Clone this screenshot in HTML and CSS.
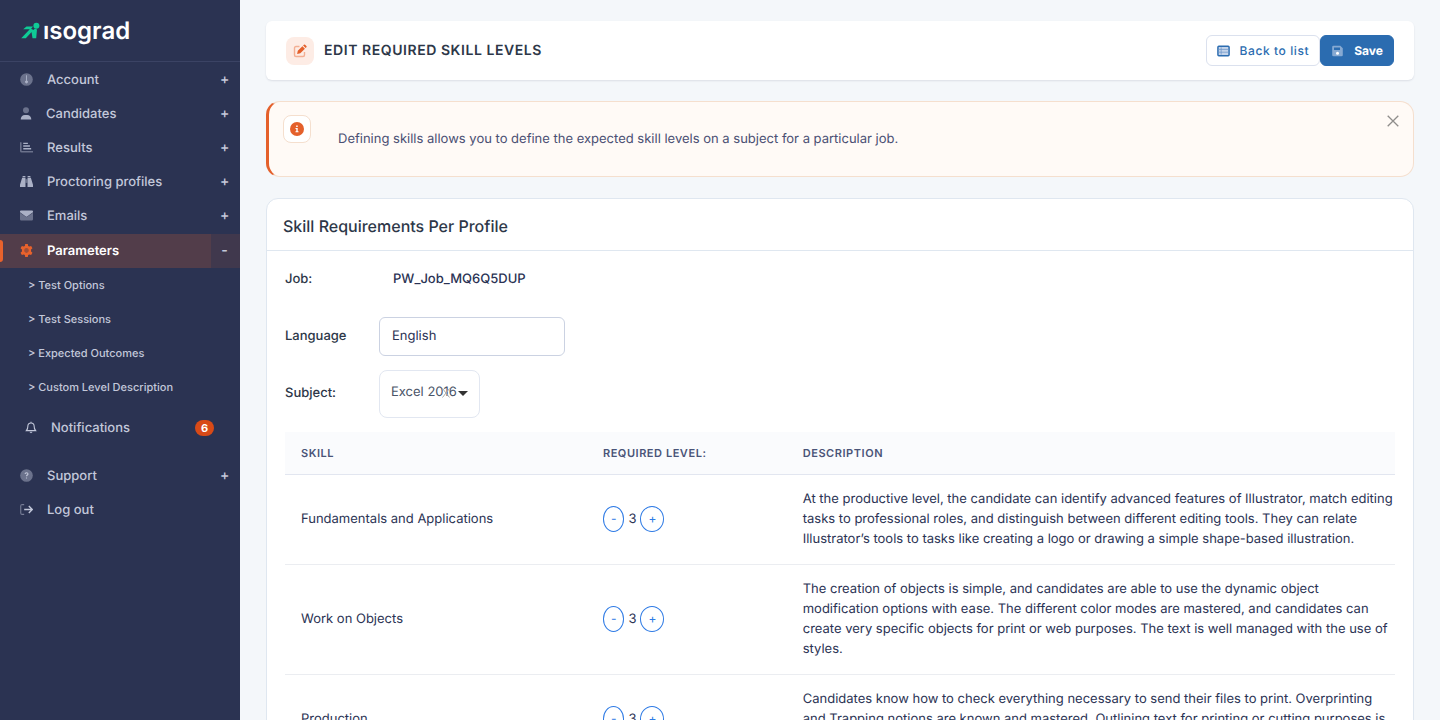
FILE: index.html
```html
<!DOCTYPE html>
<html lang="en">
<head>
<meta charset="utf-8">
<title>Edit required skill levels</title>
<link rel="stylesheet" href="styles.css">
</head>
<body>
<div class="app">
  <aside class="sidebar">
    <a class="brand" href="#">
      <svg class="brand-mark" viewBox="0 0 19 17" aria-hidden="true"><circle cx="15.400" cy="3.800" r="3"/><path d="M5.500 4.500h6.500L9.800 7.300H2.200zM9.500 6.500l3 1.500L4.800 16.200H.2zM10.500 9.800 14 6.600l2 .8-.800 8.800h-3.700z"/></svg>
      <span class="brand-name">ısograd</span>
    </a>
    <nav class="menu">
      <a class="item" href="#">
        <svg class="icon" viewBox="0 0 14 14"><circle class="dim" cx="7" cy="7" r="6.800"/><path d="M6.500 2.500h1v5.500a1.600 1.600 0 1 1-1 0z"/></svg>
        <span class="label">Account</span><span class="sign">+</span>
      </a>
      <a class="item" href="#">
        <svg class="icon narrow" viewBox="0 0 12 14"><circle class="dim" cx="6" cy="3.600" r="3.200"/><path d="M0.300 13.500c0-3 1.800-5 4.500-5h2.400c2.700 0 4.500 2 4.500 5z"/></svg>
        <span class="label">Candidates</span><span class="sign">+</span>
      </a>
      <a class="item" href="#">
        <svg class="icon" viewBox="0 0 14 14"><path class="dim" d="M0 1.300h1.700v9.500H14v1.700H1.700A1.700 1.700 0 0 1 0 10.800z"/><path d="M3.500 1.800h5v1.500h-5zM3.500 4.700h7.200v1.500H3.500zM3.500 7.600h8.500v1.500H3.500z"/></svg>
        <span class="label">Results</span><span class="sign">+</span>
      </a>
      <a class="item" href="#">
        <svg class="icon" viewBox="0 0 14 14"><path d="M2.300 3h3.600v10H0v-2.500zM11.700 3H8.100v10H14v-2.500z"/><path class="dim" d="M5.900 4.500h2.200v4H5.900z"/><path d="M2.800 1h3v1.300h-3zM8.200 1h3v1.300h-3z"/></svg>
        <span class="label">Proctoring profiles</span><span class="sign">+</span>
      </a>
      <a class="item" href="#">
        <svg class="icon" viewBox="0 0 14 14"><path class="dim" d="M0 4 7 9l7-5v7a1.300 1.300 0 0 1-1.300 1.300H1.300A1.300 1.300 0 0 1 0 11z"/><path d="M1 1.700h12q1 0 1 .9v.8L7.700 8q-.7.500-1.400 0L0 3.400v-.8q0-.9 1-.9z"/></svg>
        <span class="label">Emails</span><span class="sign">+</span>
      </a>
      <a class="item active" href="#">
        <svg class="icon" viewBox="0 0 14 14"><path fill-rule="evenodd" d="M5.600.1h2.800l.4 2 1.200.7 2-.7 1.400 2.500L11.900 6v2l1.500 1.400-1.400 2.500-2-.7-1.200.7-.4 2H5.600l-.4-2-1.200-.7-2 .7L.6 9.400 2.100 8V6L.6 4.600 2 2.100l2 .7 1.200-.7zM7 4.700a2.300 2.300 0 1 0 0 4.600 2.300 2.300 0 0 0 0-4.600z"/><circle class="dim" cx="7" cy="7" r="2.300"/></svg>
        <span class="label">Parameters</span><span class="sign">-</span>
      </a>
      <div class="submenu">
        <a class="sub" href="#">&gt; Test Options</a>
        <a class="sub" href="#">&gt; Test Sessions</a>
        <a class="sub" href="#">&gt; Expected Outcomes</a>
        <a class="sub" href="#">&gt; Custom Level Description</a>
      </div>
      <a class="item notify" href="#">
        <svg class="icon narrow" viewBox="0 0 12 14"><path class="stroke" d="M6 .8v1.300M6 2.100C3.800 2.100 2.600 3.700 2.600 5.600 2.600 8.500 1.900 9.200 1 10.400h10C10.100 9.200 9.400 8.500 9.400 5.600 9.400 3.700 8.200 2.100 6 2.100z"/><path d="M4.500 11.700h3a1.500 1.500 0 0 1-3 0z"/></svg>
        <span class="label">Notifications</span><span class="count">6</span>
      </a>
      <a class="item" href="#">
        <svg class="icon" viewBox="0 0 14 14"><circle class="dim" cx="7" cy="7" r="6.800"/><path class="stroke" d="M5.500 5.500C5.500 4.300 6.200 4 7 4s1.600.4 1.600 1.300C8.600 6.400 7 6.500 7 7.800"/><circle cx="7" cy="9.700" r=".7"/></svg>
        <span class="label">Support</span><span class="sign">+</span>
      </a>
      <a class="item" href="#">
        <svg class="icon" viewBox="0 0 14 14"><path class="stroke dimstroke" d="M4.500 1.700H2.300Q.8 1.700.8 3.200v7.600q0 1.500 1.500 1.500h2.200"/><path class="stroke bold" d="M4.500 7h8.500M9.500 3.300 13.200 7l-3.700 3.700"/></svg>
        <span class="label">Log out</span>
      </a>
    </nav>
  </aside>

  <main class="main">
    <header class="topbar">
      <span class="tile">
        <svg viewBox="0 0 14 14" aria-hidden="true"><path class="soft" d="M6.500 2.500H3Q1.500 2.500 1.500 4v7Q1.500 12.500 3 12.500h7q1.500 0 1.500-1.500V8"/><path d="m4.100 10.100.7-3.300 4.600-4.600 2.500 2.500-4.600 4.600zM10.100 1.500l.8-.8q.6-.6 1.200 0l1.300 1.300q.6.600 0 1.200l-.8.800z"/></svg>
      </span>
      <h1 class="title">Edit required skill levels</h1>
      <div class="actions">
        <button class="btn" type="button">
          <svg viewBox="0 0 14 12" aria-hidden="true"><rect x="1" y="1" width="12" height="10" rx="1" fill="#c4d4ea" stroke="#2b6cb0" stroke-width="1.600"/><path d="M1.500 4.300h11M1.500 7.300h11M4.500 2v8" stroke="#6f97c9" stroke-width=".8"/></svg>
          Back to list
        </button>
        <button class="btn primary" type="button">
          <svg viewBox="0 0 12 12" aria-hidden="true"><path fill="#86a9d2" d="M2 .8h6.800L11.300 3.300V10q0 1.300-1.300 1.300H2Q.7 11.300.7 10V2Q.7.8 2 .8z"/><path fill="#2b6cb0" d="M2.500 2.500h6v2.500h-6z"/><circle cx="6" cy="8.200" r="1.500" fill="#fff"/></svg>
          Save
        </button>
      </div>
    </header>

    <section class="alert">
      <span class="info-tile"><svg viewBox="0 0 14 14" aria-hidden="true"><circle cx="7" cy="7" r="7" fill="#e4602b"/><path fill="#fff" d="M6.200 3.600h1.500v1.400H6.200zM5.500 6h2.200v3.300h.8v1H5.500v-1h.8V7h-.8z"/></svg></span>
      <p class="alert-text">Defining skills allows you to define the expected skill levels on a subject for a particular job.</p>
      <button class="close" type="button" aria-label="Close"><svg viewBox="0 0 12 12"><path d="M.7.7l10.600 10.600M11.300.7.700 11.300"/></svg></button>
    </section>

    <section class="card">
      <h2 class="card-title">Skill Requirements Per Profile</h2>
      <div class="card-body">
        <div class="field job">
          <span class="name">Job:</span><strong class="value">PW_Job_MQ6Q5DUP</strong>
        </div>
        <div class="field">
          <label class="name" for="language">Language</label>
          <input class="input" id="language" type="text" value="English">
        </div>
        <div class="field">
          <label class="name" for="subject">Subject:</label>
          <div class="picker">
            <select class="select" id="subject"><option>Excel 2016</option></select>
            <svg class="clear" viewBox="0 0 8 10" aria-hidden="true"><path d="M.5.500l7 9M7.500.500l-7 9"/></svg>
            <svg class="caret" viewBox="0 0 10 5" aria-hidden="true"><path d="M0 0h10L5 5z"/></svg>
          </div>
        </div>
        <table class="skills">
          <thead><tr><th class="col-skill">Skill</th><th class="col-level">Required level:</th><th>Description</th></tr></thead>
          <tbody>
            <tr>
              <td>Fundamentals and Applications</td>
              <td><div class="stepper"><button class="step" type="button">-</button><span>3</span><button class="step" type="button">+</button></div></td>
              <td class="desc">At the productive level, the candidate can identify advanced features of Illustrator, match editing tasks to professional roles, and distinguish between different editing tools. They can relate Illustrator’s tools to tasks like creating a logo or drawing a simple shape-based illustration.</td>
            </tr>
            <tr>
              <td>Work on Objects</td>
              <td><div class="stepper"><button class="step" type="button">-</button><span>3</span><button class="step" type="button">+</button></div></td>
              <td class="desc">The creation of objects is simple, and candidates are able to use the dynamic object modification options with ease. The different color modes are mastered, and candidates can create very specific objects for print or web purposes. The text is well managed with the use of styles.</td>
            </tr>
            <tr>
              <td>Production</td>
              <td><div class="stepper"><button class="step" type="button">-</button><span>3</span><button class="step" type="button">+</button></div></td>
              <td class="desc">Candidates know how to check everything necessary to send their files to print. Overprinting and Trapping notions are known and mastered. Outlining text for printing or cutting purposes is well understood.</td>
            </tr>
          </tbody>
        </table>
      </div>
    </section>
  </main>
</div>
</body>
</html>
```
FILE: styles.css
```css
* { box-sizing: border-box; }

body {
  margin: 0;
  font: 13px/20px Inter, "Liberation Sans", sans-serif;
  text-rendering: geometricPrecision;
  color: #2b3354;
  background: #f4f7fa;
}

button, input, select { font: inherit; text-rendering: inherit; }
h1, h2, p { margin: 0; }

.app { display: flex; height: 100vh; overflow: hidden; }

/* Sidebar */
.sidebar { flex: 0 0 240px; background: #2b3352; color: #c3c8da; }
.brand {
  display: flex;
  align-items: center;
  gap: 3px;
  height: 62px;
  padding: 0 21px;
  border-bottom: 1px solid #3b4364;
  color: #fff;
  text-decoration: none;
}
.brand-mark { width: 19px; height: 17px; fill: #0fcb96; }
.brand-name { font-size: 24px; line-height: 32px; font-weight: 600; }

.menu { display: flex; flex-direction: column; padding-top: 1px; }
.item {
  display: flex;
  align-items: center;
  height: 34px;
  padding: 0 11px 0 20px;
  color: inherit;
  font-weight: 500;
  text-decoration: none;
}
.icon { width: 13px; height: 13px; margin: 0 14px 2px 0; fill: #abb1c6; flex: none; }
.icon.narrow { width: 12px; }
.dim { opacity: .5; }
.stroke { fill: none; stroke: #c3c8da; stroke-width: 1.2; }
.bold { stroke-width: 1.5; }
.dimstroke { opacity: .5; }
.label { flex: 1; }
.sign { width: 9px; font-size: 14px; text-align: center; }
.item.active {
  margin-top: 1px;
  color: #fff;
  font-weight: 600;
  background: linear-gradient(#523d4a, #523d4a) 0 0 / calc(100% - 29px) 100% no-repeat #40384d;
  position: relative;
}
.item.active::before {
  content: "";
  position: absolute;
  left: 0;
  top: 6px;
  width: 3px;
  height: 22px;
  border-radius: 0 3px 3px 0;
  background: #e8622c;
}
.item.active .icon { fill: #e8622c; }
.item.active .sign { color: #c3c8da; }
.submenu { display: flex; flex-direction: column; padding-bottom: 7px; }
.sub {
  padding: 7px 28px;
  color: inherit;
  font-size: 11px;
  font-weight: 500;
  text-decoration: none;
}
.notify { padding: 0 26px 0 25px; margin-bottom: 14px; }
.count {
  width: 19px;
  border-radius: 8px;
  background: #d84a17;
  color: #fff;
  font-size: 11px;
  line-height: 16px;
  font-weight: 700;
  text-align: center;
}

/* Content */
.main {
  flex: 1;
  min-width: 0;
  padding: 21px 26px;
  overflow-y: auto;
  scrollbar-width: none;
}
.topbar {
  display: flex;
  align-items: center;
  min-height: 59px;
  padding: 14px 20px;
  border-radius: 6px;
  background: #fff;
  box-shadow: 0 1px 2px #2b33521f;
}
.tile {
  display: grid;
  place-items: center;
  width: 28px;
  height: 28px;
  margin-right: 10px;
  border-radius: 8px;
  background: #fdece5;
}
.tile svg { width: 14px; height: 14px; fill: #e4602b; }
.tile .soft { fill: none; stroke: #f3ae93; stroke-width: 1.4; }
.title {
  flex: 1;
  color: #2d3748;
  font-size: 14px;
  font-weight: 600;
  letter-spacing: .04em;
  text-transform: uppercase;
}
.actions { display: flex; }
.btn {
  display: flex;
  align-items: center;
  gap: 10px;
  height: 31px;
  padding: 0 10px;
  border: 1px solid #dbe1ee;
  border-radius: 6px;
  background: #fff;
  color: #2b6cb0;
  font-size: 12px;
  font-weight: 500;
  letter-spacing: .05em;
}
.btn svg { width: 13px; height: 12px; }
.btn.primary {
  border-color: #2b6cb0;
  background: #2b6cb0;
  color: #fff;
  font-weight: 700;
  letter-spacing: 0;
}

.alert {
  display: flex;
  align-items: flex-start;
  min-height: 76px;
  margin: 21px 0;
  padding: 13px 14px;
  border: 1px solid #f5dfce;
  border-left: 3px solid #e4602b;
  border-radius: 14px;
  background: #fffaf6;
}
.info-tile {
  display: grid;
  place-items: center;
  width: 28px;
  height: 28px;
  border: 1px solid #f5dfce;
  border-radius: 8px;
  background: #fff;
}
.info-tile svg { width: 14px; height: 14px; }
.alert-text { flex: 1; padding: 14px 27px; color: #4a4f73; }
.close { padding: 0; border: 0; background: none; line-height: 0; }
.close svg { width: 12px; height: 12px; fill: none; stroke: #8f8d8b; stroke-width: 1.3; }

.card { border: 1px solid #dfe7f0; border-radius: 12px; background: #fff; }
.card-title {
  padding: 17px 16px 14px;
  border-bottom: 1px solid #dfe7f0;
  color: #2d3748;
  font-size: 16px;
  font-weight: 500;
}
.card-body { padding: 18px; }
.field { display: flex; align-items: center; margin-bottom: 14px; }
.name { width: 94px; padding-bottom: 2px; color: #2d3748; font-weight: 500; }
.value { padding: 0 14px 2px; font-weight: 500; }
.job { margin-bottom: 26px; }
.input {
  width: 186px;
  height: 39px;
  padding: 0 12px 2px;
  border: 1px solid #cbd2e2;
  border-radius: 6px;
  background: #fff;
  color: #2b3354;
}
.picker { position: relative; }
.select {
  display: block;
  width: 101px;
  height: 48px;
  padding: 0 11px 4px;
  border: 1px solid #e2e7f1;
  border-radius: 8px;
  appearance: none;
  background: #fff;
  color: #4a5568;
}
.clear { position: absolute; right: 30px; top: 18px; width: 8px; height: 10px; fill: none; stroke: #aaa; }
.caret { position: absolute; right: 12px; top: 21px; width: 10px; height: 5px; fill: #333; }

.skills { width: 100%; border-collapse: collapse; table-layout: fixed; }
.skills th {
  padding: 11px 16px;
  border-bottom: 1px solid #e2e6f0;
  background: #fafbfd;
  color: #4a5478;
  font-size: 11px;
  font-weight: 600;
  letter-spacing: .05em;
  text-align: left;
  text-transform: uppercase;
}
.col-skill { width: 27.2%; }
.col-level { width: 18%; }
.skills td { padding: 14px 16px 15px; border-bottom: 1px solid #ebedf1; }
.skills .desc { padding-right: 0; }
.stepper { display: flex; align-items: center; gap: 4px; }
.step {
  height: 26px;
  padding: 0 7px;
  border: 1px solid #2f7be5;
  border-radius: 50%;
  background: #fff;
  color: #2f7be5;
  font-size: 12px;
}
```
